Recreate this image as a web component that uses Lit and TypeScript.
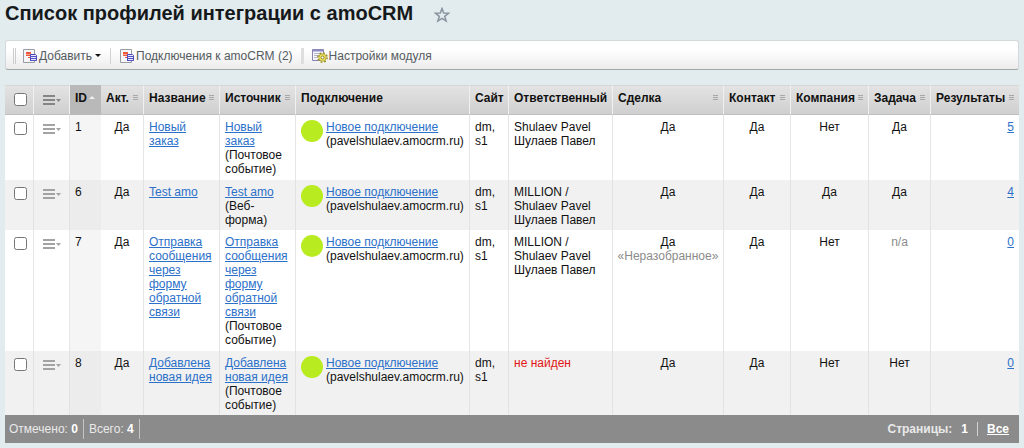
import { LitElement, html, css, svg, nothing } from "lit";
import { customElement } from "lit/decorators.js";
import { classMap } from "lit/directives/class-map.js";

interface Profile {
  id: number;
  name: string;
  kind: string;
  owner: string[];
  missing?: boolean;
  deal: string;
  dealNote?: string;
  contact: string;
  company: string;
  task: string;
  results: number;
}

const profiles: Profile[] = [
  { id: 1, name: "Новый заказ", kind: "(Почтовое событие)", owner: ["Shulaev Pavel", "Шулаев Павел"], deal: "Да", contact: "Да", company: "Нет", task: "Да", results: 5 },
  { id: 6, name: "Test amo", kind: "(Веб-форма)", owner: ["MILLION /", "Shulaev Pavel", "Шулаев Павел"], deal: "Да", contact: "Да", company: "Да", task: "Да", results: 4 },
  { id: 7, name: "Отправка сообщения через форму обратной связи", kind: "(Почтовое событие)", owner: ["MILLION /", "Shulaev Pavel", "Шулаев Павел"], deal: "Да", dealNote: "«Неразобранное»", contact: "Да", company: "Нет", task: "n/a", results: 0 },
  { id: 8, name: "Добавлена новая идея", kind: "(Почтовое событие)", owner: ["не найден"], missing: true, deal: "Да", contact: "Да", company: "Нет", task: "Нет", results: 0 },
];

const columns = [
  { key: "id", title: "ID", sort: "up" },
  { key: "act", title: "Акт.", sort: "any" },
  { key: "name", title: "Название", sort: "any" },
  { key: "source", title: "Источник", sort: "any" },
  { key: "link", title: "Подключение", sort: "" },
  { key: "site", title: "Сайт", sort: "" },
  { key: "owner", title: "Ответственный", sort: "" },
  { key: "deal", title: "Сделка", sort: "any" },
  { key: "contact", title: "Контакт", sort: "any" },
  { key: "company", title: "Компания", sort: "any" },
  { key: "task", title: "Задача", sort: "any" },
  { key: "results", title: "Результаты", sort: "any" },
];

const starIcon = html`<svg width="16" height="16" viewBox="0 0 16 16" aria-hidden="true">
  <path d="M8 1.6l1.7 4.5 4.8.2-3.8 3 1.4 4.8L8 11.4l-4.1 2.7 1.4-4.8-3.8-3 4.8-.2z" fill="none" stroke="#87939f" stroke-width="1.5" stroke-linejoin="miter"/>
</svg>`;

const profileIcon = html`<svg width="14" height="14" viewBox="0 0 14 14" aria-hidden="true">
  <path d="M.5.5h11v13H.5z" fill="#f7f8f9" stroke="#999da3"/>
  <path d="M3 3h5v2H3zM3 6h4v1H3zM5 8h2v1H5z" fill="#ee583c"/>
  <path d="M3 5.500h5" stroke="#f6a392"/>
  <path d="M7.500 5.500h5l1 1v5h-6z" fill="#e9e9ff" stroke="#4a47b4"/>
  <path d="M7 7.500h6M7 9.500h6M7 11.500h6" stroke="#5451c4"/>
</svg>`;

const settingsIcon = html`<svg width="16" height="16" viewBox="0 0 16 16" aria-hidden="true">
  <path d="M.5 1.500h11v11H.5z" fill="#f6f5fb" stroke="#8683b0"/>
  <path d="M1 2.500h10" stroke="#8f8bc4" stroke-width="2"/>
  <path d="M2 5.500h8M2 7.500h5M2 9.500h4" stroke="#b9b7d0"/>
  <circle cx="10.500" cy="9.500" r="4.600" fill="none" stroke="#9b902b" stroke-width="1.600" stroke-dasharray="1.810 1.800"/>
  <circle cx="10.500" cy="9.500" r="3.700" fill="#f0e45c" stroke="#b8ac45"/>
  <circle cx="10.500" cy="9.500" r="1.500" fill="#fff" stroke="#8f8530"/>
</svg>`;

const menuIcon = (color: string) => html`<svg width="19" height="11" viewBox="0 0 19 11" aria-hidden="true">
  ${svg`<path d="M0 1h12M0 5h12M0 9h12" stroke=${color} stroke-width="2"/><path d="M13 4h5l-2.500 3z" fill=${color}/>`}
</svg>`;

@customElement("app-root")
export class AppRoot extends LitElement {
  static styles = css`
    :host {
      display: block;
      min-height: 100vh;
      box-sizing: border-box;
      padding: 0 5px 4px;
      background: #e2ebed;
      color: #111;
      font: 12px/14px "Liberation Sans", Arial, sans-serif;
    }
    svg { display: block; flex: none; }
    .title { display: flex; align-items: center; gap: 21px; height: 30px; padding-bottom: 10px; }
    h1 { margin: 0; padding-bottom: 4px; font-size: 20px; line-height: 24px; color: #16191b; }
    button { border: 0; padding: 0; background: none; font: inherit; color: inherit; cursor: pointer; }
    .toolbar {
      display: flex;
      align-items: center;
      height: 30px;
      box-sizing: border-box;
      padding: 1px 7px 0;
      border: 1px solid #d3d9db;
      border-bottom-color: #a1a6a8;
      border-radius: 3px;
      background: linear-gradient(#fff 30%, #ececec);
      color: #555b60;
    }
    .grip { width: 1px; height: 16px; margin-right: 7px; border: solid #cdcdcd; border-width: 0 1px; }
    .tool { display: flex; align-items: center; gap: 2px; color: inherit; text-decoration: none; }
    .settings { gap: 1px; }
    .caret { margin-left: 1px; border: 3px solid transparent; border-top-color: #111; border-bottom: 0; }
    .split { width: 1px; height: 16px; margin: 0 9px; background: #d2d2d2; }
    .wide { width: 3px; margin: 0 8px; background: #dedede; }
    table { width: 100%; margin-top: 15px; border-collapse: separate; border-spacing: 0; table-layout: fixed; }
    th { height: 30px; box-sizing: border-box; padding: 0 5px 5px; border: solid #d6d6d6; border-width: 1px 1px 1px 0; border-bottom-color: #bfbfbf;
      border-right-color: #f0f0f0; background: linear-gradient(#e3e3e3, #cfcfcf); text-align: left; white-space: nowrap; }
    td { padding: 5px 5px 4px; border-right: 1px solid #e6e6e6; background: #fff; vertical-align: top; }
    tr:nth-child(even) td { background: #f1f1f1; border-right-color: #e2e2e2; padding-bottom: 3px; }
    th:last-child, td:last-child { border-right: 0; }
    .head { display: flex; align-items: center; justify-content: space-between; }
    .c-check { width: 29px; }
    .c-menu { width: 36px; }
    .c-id { width: 31px; }
    .c-act { width: 43px; }
    .c-name, .c-source { width: 76px; }
    .c-link { width: 174px; }
    .c-site { width: 39px; }
    .c-owner { width: 104px; }
    .c-contact { width: 67px; }
    .c-company { width: 78px; }
    .c-task { width: 62px; }
    .c-results { width: 88px; }
    th.sorted { background: #b9b9b9; border-color: #b9b9b9; }
    td.sorted { background: #f5f5f5; border-right-color: #f5f5f5; }
    tr:nth-child(even) td.sorted { background: #ececec; border-right-color: #ececec; }
    .any { width: 5px; height: 5px; background: repeating-linear-gradient(#a8a8a8 0 1px, transparent 1px 2px); }
    .up { border: 3px solid transparent; border-bottom-color: #eee; border-top: 0; }
    th.pick, th.actions { padding: 0 0 2px; }
    td.pick, td.actions, tr:nth-child(even) td.pick, tr:nth-child(even) td.actions { padding: 7px 0 0; }
    .pick input { display: block; width: 13px; height: 13px; margin: 0 0 0 9px; }
    .actions button { display: block; margin: 2px 0 0 9px; }
    .center { text-align: center; }
    .right { text-align: right; }
    a { color: #2b70c9; }
    .conn { display: flex; gap: 3px; }
    .dot { width: 22px; height: 22px; flex: none; border-radius: 50%; background: #b8eb20; }
    .muted { color: #8b8b8b; }
    .note { margin: 0 -5px; color: #8b8b8b; }
    .missing { color: #e21717; }
    .footer {
      display: flex;
      align-items: center;
      height: 28px;
      background: #8b8b8b;
      color: #e9e9e9;
      padding: 0 10px 0 4px;
    }
    .count { padding-right: 5px; margin-right: 5px; border-right: 1px solid #c4c4c4; line-height: 20px; }
    .footer b { color: #fff; }
    .pages { display: flex; align-items: center; margin-left: auto; font-weight: bold; }
    .current { padding: 0 9px; border-right: 1px solid #d2d2d2; margin-right: 9px; }
    .pages a { color: #fff; }
  `;

  private row(p: Profile) {
    return html`<tr>
      <td class="pick"><input type="checkbox" aria-label="Выбрать профиль ${p.id}" /></td>
      <td class="actions"><button aria-label="Действия">${menuIcon("#a3a3a3")}</button></td>
      <td class="sorted">${p.id}</td>
      <td class="center">Да</td>
      <td><a href="#${p.id}">${p.name}</a></td>
      <td><a href="#source-${p.id}">${p.name}</a><br />${p.kind}</td>
      <td>
        <div class="conn">
          <span class="dot"></span>
          <div><a href="#connection">Новое подключение</a><br />(pavelshulaev.amocrm.ru)</div>
        </div>
      </td>
      <td>dm, s1</td>
      <td class=${classMap({ missing: !!p.missing })}>${p.owner.map((line) => html`<div>${line}</div>`)}</td>
      <td class="center">${p.deal}${p.dealNote ? html`<div class="note">${p.dealNote}</div>` : nothing}</td>
      <td class="center">${p.contact}</td>
      <td class="center">${p.company}</td>
      <td class=${classMap({ center: true, muted: p.task === "n/a" })}>${p.task}</td>
      <td class="right"><a href="#results-${p.id}">${p.results}</a></td>
    </tr>`;
  }

  render() {
    return html`
      <header class="title">
        <h1>Список профилей интеграции с amoCRM</h1>
        <button aria-label="Добавить в избранное">${starIcon}</button>
      </header>
      <nav class="toolbar">
        <span class="grip"></span>
        <button class="tool">${profileIcon}Добавить<span class="caret"></span></button>
        <span class="split"></span>
        <a class="tool" href="#connections">${profileIcon}Подключения к amoCRM (2)</a>
        <span class="split wide"></span>
        <a class="tool settings" href="#settings">${settingsIcon}Настройки модуля</a>
      </nav>
      <table>
        <colgroup>
          <col class="c-check" /><col class="c-menu" />
          ${columns.map((c) => html`<col class="c-${c.key}" />`)}
        </colgroup>
        <thead>
          <tr>
            <th class="pick"><input type="checkbox" aria-label="Выбрать все" /></th>
            <th class="actions"><button aria-label="Настройка списка">${menuIcon("#858585")}</button></th>
            ${columns.map((c) => html`<th class=${classMap({ sorted: c.sort === "up" })}>
              <div class="head">${c.title}${c.sort ? html`<span class=${c.sort}></span>` : nothing}</div>
            </th>`)}
          </tr>
        </thead>
        <tbody>${profiles.map((p) => this.row(p))}</tbody>
      </table>
      <footer class="footer">
        <span class="count">Отмечено: <b>0</b></span>
        <span class="count">Всего: <b>${profiles.length}</b></span>
        <span class="pages">Страницы: <span class="current"><b>1</b></span><a href="#all">Все</a></span>
      </footer>
    `;
  }
}
